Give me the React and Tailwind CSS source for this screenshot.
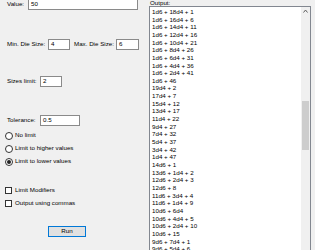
import React from 'react';

const outputLines = [
  '1d6 + 18d4 + 1', '1d6 + 16d4 + 6', '1d6 + 14d4 + 11', '1d6 + 12d4 + 16',
  '1d6 + 10d4 + 21', '1d6 + 8d4 + 26', '1d6 + 6d4 + 31', '1d6 + 4d4 + 36',
  '1d6 + 2d4 + 41', '1d6 + 46', '19d4 + 2', '17d4 + 7', '15d4 + 12', '13d4 + 17',
  '11d4 + 22', '9d4 + 27', '7d4 + 32', '5d4 + 37', '3d4 + 42', '1d4 + 47',
  '14d6 + 1', '13d6 + 1d4 + 2', '12d6 + 2d4 + 3', '12d6 + 8', '11d6 + 3d4 + 4',
  '11d6 + 1d4 + 9', '10d6 + 6d4', '10d6 + 4d4 + 5', '10d6 + 2d4 + 10', '10d6 + 15',
  '9d6 + 7d4 + 1', '9d6 + 5d4 + 6',
];

// small winforms-ish text box
const Field = ({ value, className }) => (
  <div className={`h-[11px] shrink-0 border border-[#8a8a8a] bg-white pl-[2px] flex items-center ${className}`}>
    {value}
  </div>
);

const Radio = ({ label, checked }) => (
  <div className="h-[13px] flex items-center pl-[5px] gap-[2px]">
    <span className="w-[8px] h-[8px] rounded-full border border-[#333] bg-white flex items-center justify-center">
      {checked && <span className="w-[4px] h-[4px] rounded-full bg-[#222]"></span>}
    </span>
    <span>{label}</span>
  </div>
);

const Check = ({ label }) => (
  <div className="h-[13px] flex items-center pl-[5px] gap-[3px]">
    <span className="w-[7px] h-[7px] border border-[#333] bg-white"></span>
    <span>{label}</span>
  </div>
);

export default function App() {
  return (
    <div
      className="w-[315px] h-[250px] overflow-hidden bg-[#f0f0f0] flex text-[6.2px] text-black leading-none whitespace-nowrap"
      style={{ fontFamily: '"Liberation Sans", Arial, sans-serif' }}
    >
      {/* left settings panel */}
      <div className="w-[149px] shrink-0 flex flex-col">
        <div className="mt-[-1px] flex items-center">
          <span className="w-[28px] shrink-0 pl-[7px]">Value:</span>
          <Field value="50" className="w-[110px]" />
        </div>

        <div className="mt-[29px] flex items-center">
          <span className="w-[48px] shrink-0 pl-[7px]">Min. Die Size:</span>
          <Field value="4" className="w-[22px]" />
          <span className="w-[46px] shrink-0 pl-[4px]">Max. Die Size:</span>
          <Field value="6" className="w-[23px]" />
        </div>

        <div className="mt-[26px] flex items-center">
          <span className="w-[40px] shrink-0 pl-[7px]">Sizes limit:</span>
          <Field value="2" className="w-[22px]" />
        </div>

        <div className="mt-[28px] flex items-center">
          <span className="w-[40px] shrink-0 pl-[7px]">Tolerance:</span>
          <Field value="0.5" className="w-[40px]" />
        </div>

        <div className="mt-[3px] flex flex-col">
          <Radio label="No limit" />
          <Radio label="Limit to higher values" />
          <Radio label="Limit to lower values" checked />
        </div>

        <div className="mt-[16px] flex flex-col">
          <Check label="Limit Modifiers" />
          <Check label="Output using commas" />
        </div>

        <div className="mt-[16px] pl-[48px]">
          <button className="w-[38px] h-[11px] border border-[#0078d7] bg-[#e1e1e1] flex items-center justify-center">
            Run
          </button>
        </div>
      </div>

      {/* output list */}
      <div className="w-[162px] shrink-0 flex flex-col">
        <div className="h-[11px] pl-[1px] flex items-center">Output:</div>
        <div className="flex-1 border border-[#828790] border-b-0 bg-white flex">
          <div className="flex-1 pl-[2px] pt-[1px] flex flex-col">
            {outputLines.map((line, i) => (
              <div key={i} className="h-[7.67px] shrink-0 flex items-center">
                {line}
              </div>
            ))}
          </div>
          <div className="w-[9px] bg-[#f0f0f0] flex flex-col items-center">
            <svg width="5" height="4" viewBox="0 0 5 4" className="mt-[2px]">
              <path d="M0.5 3.5 L2.5 1 L4.5 3.5" stroke="#606060" strokeWidth="1" fill="none" />
            </svg>
            <div className="mt-[88px] w-[7px] h-[49px] bg-[#cdcdcd]"></div>
          </div>
        </div>
      </div>
    </div>
  );
}
